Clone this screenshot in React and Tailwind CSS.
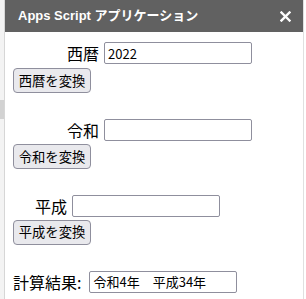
const jp = "font-['Noto_Sans_CJK_JP',sans-serif]";

const Field = ({ label, value, indent, gap = "ml-[5px]" }) => (
  <div className="flex items-center h-[22px]" style={{ paddingLeft: indent }}>
    <span className="text-[16px] leading-none text-black">{label}</span>
    <input
      readOnly
      defaultValue={value}
      className={`${gap} w-[148px] h-[22px] border border-[#8f8f9d] rounded-[2px] px-[3px] text-[13px] text-black bg-white outline-none font-['Noto_Sans_CJK_JP',sans-serif]`}
    />
  </div>
);

const ConvertButton = ({ children }) => (
  <button className="ml-[8px] w-[78px] h-[25px] bg-[#e9e9ed] border border-[#8f8f9d] rounded-[4px] text-[13.33px] leading-none text-black">
    {children}
  </button>
);

const CloseIcon = () => (
  <svg width="11" height="11" viewBox="0 0 11 11">
    <path d="M1.5 1.5 L9.5 9.5 M9.5 1.5 L1.5 9.5" stroke="#fff" strokeWidth="2.4" strokeLinecap="square" />
  </svg>
);

export default function App() {
  return (
    <div className={`flex w-[306px] h-[299px] bg-white ${jp}`}>
      <aside className="w-[5px] shrink-0 bg-[#f3f3f3] border-r border-[#d6d6d6] flex flex-col">
        <div className="h-[100px]" />
        <div className="h-[19px] bg-[#d2d2d2]" />
      </aside>

      <main className="w-[299px] shrink-0 flex flex-col border-r border-[#e0e0e0]">
        <header className="h-[32px] bg-[#616161] flex items-center justify-between pl-[13px] pr-[12px]">
          <h1 className="text-white text-[13px] font-bold font-['Liberation_Sans','Noto_Sans_CJK_JP',sans-serif]">
            Apps Script アプリケーション
          </h1>
          <CloseIcon />
        </header>

        <section className="flex flex-col">
          <div className="mt-[10px]">
            <Field label="西暦" value="2022" indent="62px" />
          </div>
          <div className="mt-[3px]">
            <ConvertButton>西暦を変換</ConvertButton>
          </div>

          <div className="mt-[26px]">
            <Field label="令和" value="" indent="62px" />
          </div>
          <div className="mt-[2px]">
            <ConvertButton>令和を変換</ConvertButton>
          </div>

          <div className="mt-[26px]">
            <Field label="平成" value="" indent="30px" />
          </div>
          <div className="mt-[1px]">
            <ConvertButton>平成を変換</ConvertButton>
          </div>

          <div className="mt-[26px]">
            <Field label="計算結果:" value="令和4年　平成34年" indent="8px" gap="ml-[8px]" />
          </div>
        </section>
      </main>
    </div>
  );
}
